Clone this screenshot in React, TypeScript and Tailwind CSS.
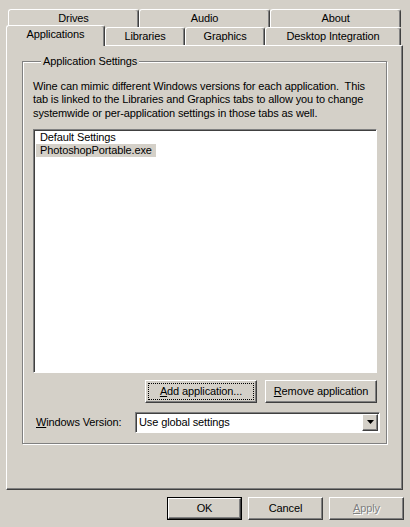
import React from "react";

const raised =
  "border border-t-white border-l-white border-r-[#404040] border-b-[#404040] shadow-[inset_-1px_-1px_0_#808080]";
const sunken =
  "border border-t-[#808080] border-l-[#808080] border-r-white border-b-white shadow-[inset_1px_1px_0_#404040]";

function Tab({ label, className }: { label: string; className: string }) {
  return (
    <div
      className={`flex items-center justify-center border-t border-l border-r border-t-white border-l-white border-r-[#404040] shadow-[inset_-1px_0_0_#808080] rounded-t-[3px] bg-[#d4d0c8] ${className}`}
    >
      {label}
    </div>
  );
}

function Button({
  children,
  className = "",
  def = false,
}: {
  children: React.ReactNode;
  className?: string;
  def?: boolean;
}) {
  if (def) {
    return (
      <div className={`border border-black ${className}`}>
        <div className={`${raised} h-full flex items-center justify-center`}>{children}</div>
      </div>
    );
  }
  return <div className={`${raised} flex items-center justify-center ${className}`}>{children}</div>;
}

export default function App() {
  return (
    <div
      className="w-[410px] h-[527px] bg-[#d4d0c8] text-black text-[11px] leading-[13px] tracking-[-0.12px] overflow-hidden select-none"
      style={{ fontFamily: '"Liberation Sans", Arial, sans-serif' }}
    >
      <div className="pt-[9px]">
        <div className="flex pl-[8px] h-[18px]">
          <Tab label="Drives" className="w-[131px] h-[18px] pb-[1px]" />
          <Tab label="Audio" className="w-[131px] h-[18px] pb-[1px]" />
          <Tab label="About" className="w-[131px] h-[18px] pb-[1px]" />
        </div>
        <div className="flex pl-[6px] h-[18px] items-end">
          <Tab label="Applications" className="w-[99px] h-[21px] -mb-px relative z-10 pb-[3px]" />
          <Tab label="Libraries" className="w-[80px] h-[18px]" />
          <Tab label="Graphics" className="w-[80px] h-[18px]" />
          <Tab label="Desktop Integration" className="w-[136px] h-[18px]" />
        </div>
      </div>

      <div className={`${raised} ml-[6px] w-[397px] h-[445px] pt-[9px] pl-[15px]`}>
        <fieldset className="w-[365px] border border-[#808080] shadow-[inset_1px_1px_0_#fff,1px_1px_0_#fff] pl-[10px] pb-[10px]">
          <legend className="ml-[8px] px-[2px] bg-[#d4d0c8] leading-[13px]">Application Settings</legend>
          <div className="mt-[12px] leading-[13.33px]">
            <div className="whitespace-pre">Wine can mimic different Windows versions for each application.  This</div>
            <div className="whitespace-pre">tab is linked to the Libraries and Graphics tabs to allow you to change</div>
            <div className="whitespace-pre">systemwide or per-application settings in those tabs as well.</div>
          </div>
          <div className={`${sunken} mt-[9px] w-[344px] h-[244px] bg-white p-[1px]`}>
            <div className="h-[13px] flex items-center pl-[5px]">Default Settings</div>
            <div className="h-[13px] flex items-center pl-[1px]">
              <span className="bg-[#d4d0c8] h-[13px] flex items-center px-[4px]">PhotoshopPortable.exe</span>
            </div>
          </div>
          <div className="w-[344px] flex justify-end gap-[8px] mt-[7px]">
            <Button className="w-[112px] h-[23px] outline-1 outline-dotted outline-black -outline-offset-4">
              <span>
                <span className="underline">A</span>dd application...
              </span>
            </Button>
            <Button className="w-[112px] h-[23px]">
              <span>
                <span className="underline">R</span>emove application
              </span>
            </Button>
          </div>
          <div className="flex items-center mt-[9px]">
            <div className="w-[102px] pl-[3px]">
              <span className="underline">W</span>indows Version:
            </div>
            <div className={`${sunken} w-[245px] h-[21px] bg-white flex items-center pl-[3px] pr-[1px] py-[1px]`}>
              <span className="flex-1">Use global settings</span>
              <div className={`${raised} w-[16px] h-[17px] bg-[#d4d0c8] flex items-center justify-center`}>
                <svg width="7" height="4" viewBox="0 0 7 4">
                  <path d="M0 0h7L3.5 4z" fill="#000" />
                </svg>
              </div>
            </div>
          </div>
        </fieldset>
      </div>

      <div className="flex justify-end gap-[6px] pr-[6px] mt-[7px]">
        <Button def className="w-[75px] h-[23px]">
          OK
        </Button>
        <Button className="w-[75px] h-[23px]">Cancel</Button>
        <Button className="w-[75px] h-[23px]">
          <span className="text-[#808080] [text-shadow:1px_1px_0_#fff]">
            <span className="underline">A</span>pply
          </span>
        </Button>
      </div>
    </div>
  );
}
